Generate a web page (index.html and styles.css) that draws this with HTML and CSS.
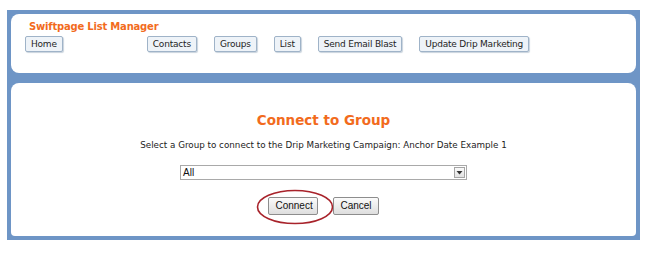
FILE: index.html
```html
<!DOCTYPE html>
<html>
<head>
<meta charset="utf-8">
<link rel="stylesheet" href="styles.css">
</head>
<body>
<div class="frame">
  <div class="panel top">
    <div class="app-title">Swiftpage List Manager</div>
    <div class="nav">
      <span class="nav-btn home">Home</span>
      <span class="nav-btn">Contacts</span>
      <span class="nav-btn">Groups</span>
      <span class="nav-btn">List</span>
      <span class="nav-btn">Send Email Blast</span>
      <span class="nav-btn">Update Drip Marketing</span>
    </div>
  </div>
  <div class="panel main">
    <h1 class="heading">Connect to Group</h1>
    <p class="desc">Select a Group to connect to the Drip Marketing Campaign: Anchor Date Example 1</p>
    <div class="select">
      <span class="select-value">All</span>
      <span class="select-arrow"><svg width="7" height="4" viewBox="0 0 7 4"><path d="M0.5 0H6.5L3.5 3.5Z" fill="#333"/></svg></span>
    </div>
    <div class="actions">
      <span class="btn connect">Connect
        <svg class="ring" width="78" height="36" viewBox="0 0 78 36"><ellipse cx="39" cy="18" rx="37.5" ry="16.5" fill="none" stroke="#a8232b" stroke-width="1.6"/></svg>
      </span>
      <span class="btn">Cancel</span>
    </div>
  </div>
</div>
</body>
</html>
```

FILE: styles.css
```css
html, body {
  margin: 0;
  padding: 0;
  background: #ffffff;
}
body {
  padding: 10px 0 0 7px;
  font-family: "DejaVu Sans", Verdana, sans-serif;
}
.frame {
  width: 625px;
  height: 222px;
  background: #6e95c6;
  padding: 4px;
  display: flex;
  flex-direction: column;
  gap: 10px;
}
.panel {
  background: #ffffff;
  box-sizing: border-box;
}
.top {
  height: 59px;
  border-radius: 8px;
  padding: 7px 0 0 14px;
}
.app-title {
  color: #f26b1d;
  font-weight: bold;
  font-size: 10px;
  line-height: 12px;
  letter-spacing: -0.2px;
  padding-left: 4px;
}
.nav {
  display: flex;
  gap: 17px;
  margin-top: 3px;
}
.nav-btn {
  height: 16px;
  box-sizing: border-box;
  padding: 0 5px;
  font-size: 9px;
  letter-spacing: -0.2px;
  line-height: 14px;
  color: #1e1e1e;
  background: #eef3f8;
  border: 1px solid #9fb3c8;
  border-radius: 2px;
  box-shadow: 1px 1px 1px #c9d3dd;
}
.home {
  margin-right: 67px;
}
.main {
  height: 153px;
  border-radius: 8px 8px 4px 4px;
  display: flex;
  flex-direction: column;
  align-items: center;
  padding-top: 28px;
}
.heading {
  margin: 0;
  color: #f26b1d;
  font-size: 13.5px;
  line-height: 18px;
  font-weight: bold;
}
.desc {
  margin: 11px 0 0;
  font-size: 8.75px;
  line-height: 10px;
  color: #222;
}
.select {
  margin-top: 15px;
  width: 287px;
  height: 15px;
  box-sizing: border-box;
  border: 1px solid #a9a9a9;
  display: flex;
  align-items: center;
  justify-content: space-between;
  font-family: "Liberation Sans", Arial, sans-serif;
  font-size: 10px;
  color: #111;
}
.select-value {
  padding-left: 2px;
}
.select-arrow {
  width: 11px;
  height: 11px;
  margin-right: 1px;
  box-sizing: border-box;
  border: 1px solid #a5a5a5;
  background: linear-gradient(#fafafa, #e2e2e2);
  display: flex;
  align-items: center;
  justify-content: center;
}
.actions {
  display: flex;
  gap: 15px;
  margin-top: 17px;
}
.btn {
  position: relative;
  height: 18px;
  box-sizing: border-box;
  padding: 0 6px;
  font-family: "Liberation Sans", Arial, sans-serif;
  font-size: 10px;
  line-height: 16px;
  color: #111;
  border: 1px solid #8d8d8d;
  border-radius: 2px;
  background: linear-gradient(#fbfbfb, #dedede);
}
.connect {
  width: 50px;
  text-align: center;
}
.ring {
  position: absolute;
  left: -13px;
  top: -9px;
}
```
